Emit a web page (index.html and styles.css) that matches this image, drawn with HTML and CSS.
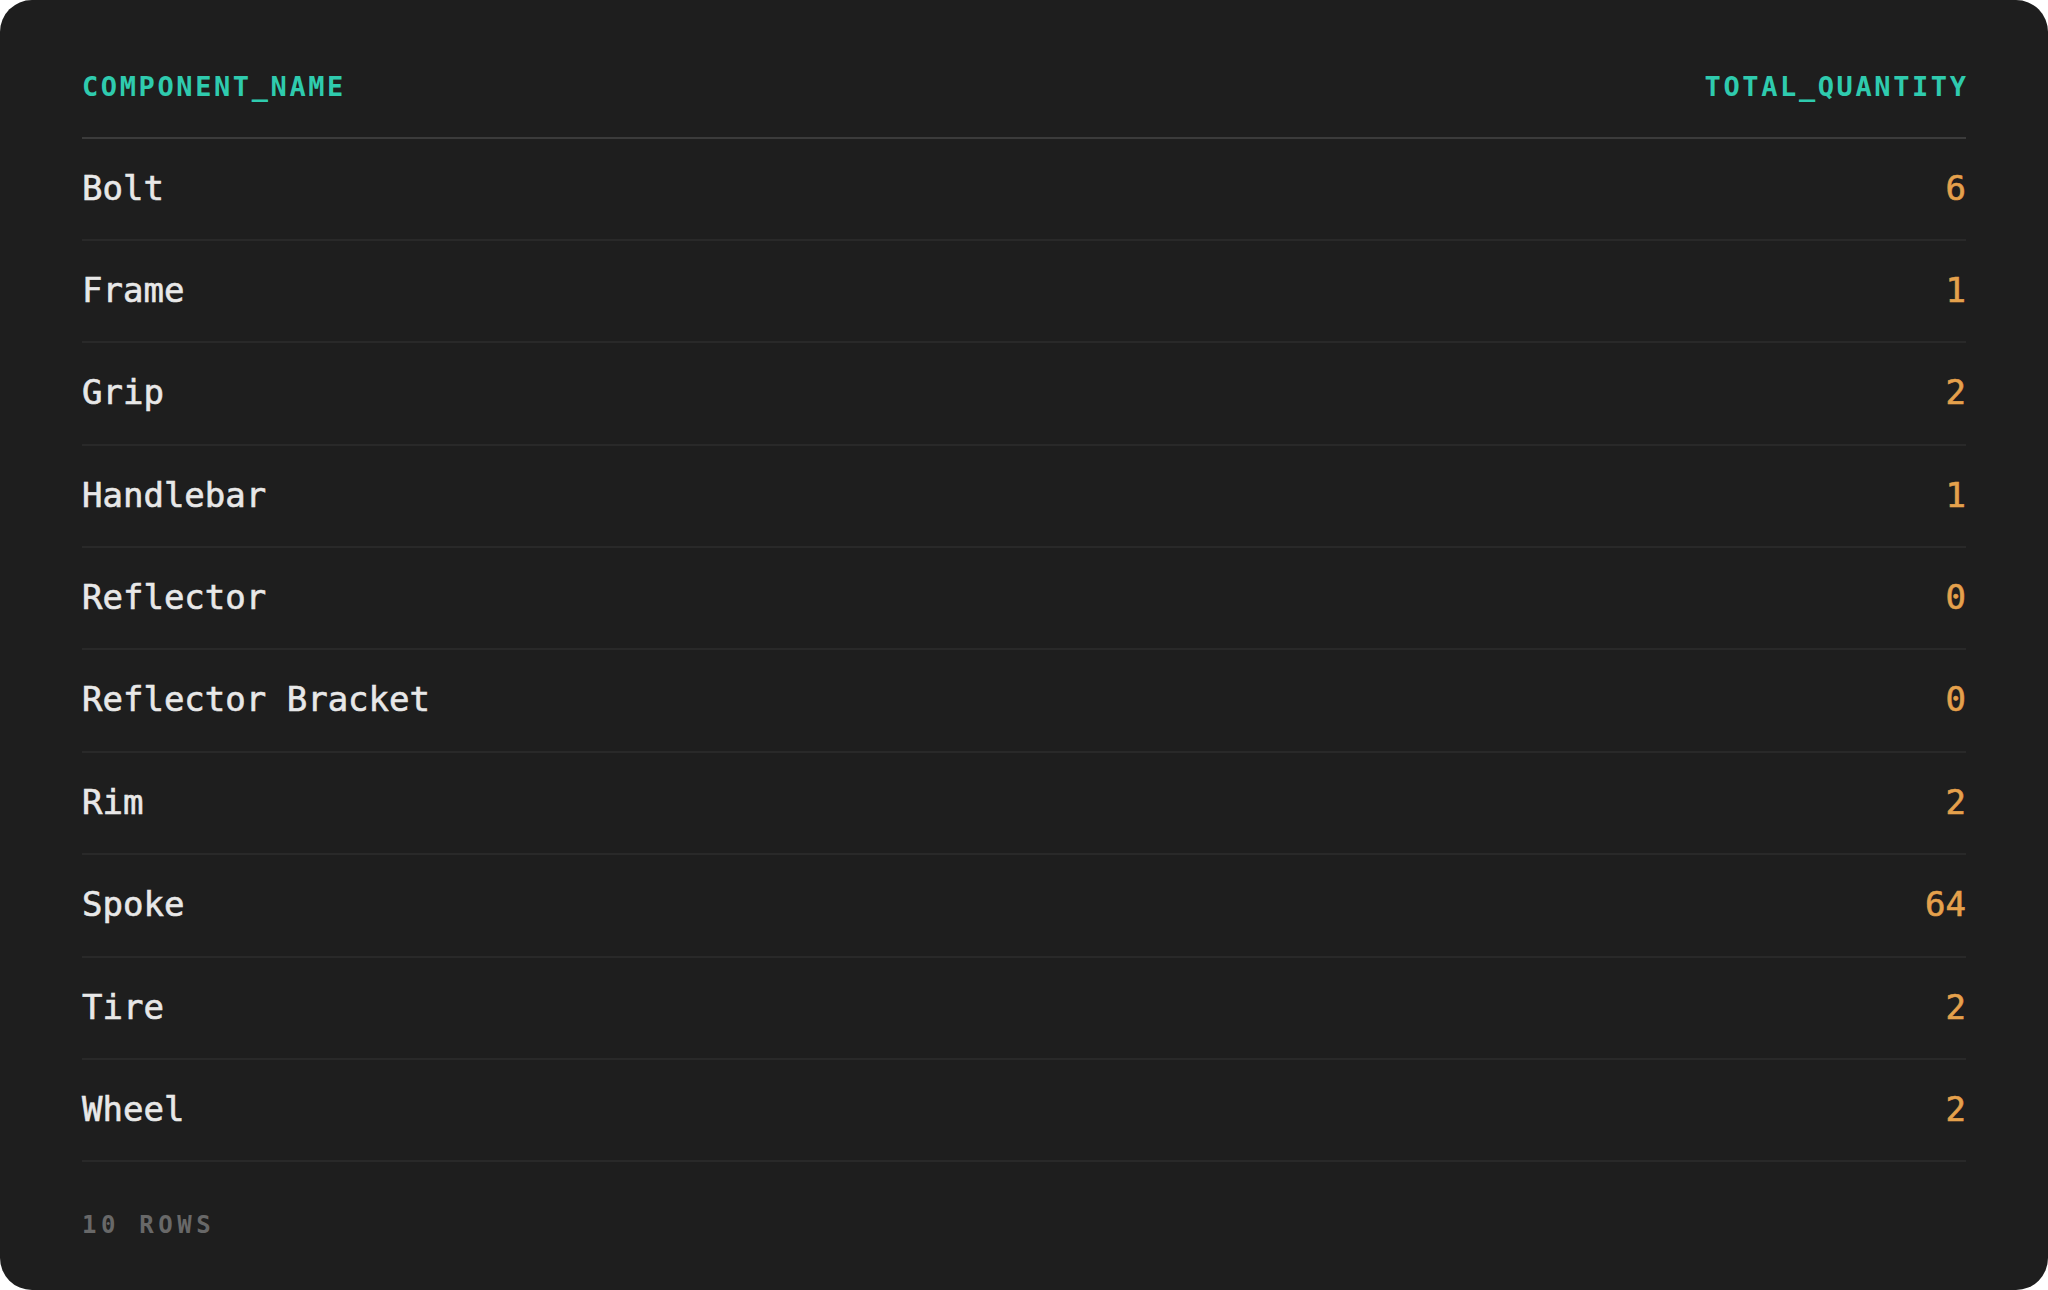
FILE: index.html
```html
<!DOCTYPE html>
<html lang="en">
<head>
<meta charset="utf-8">
<title>Query result</title>
<link rel="stylesheet" href="styles.css">
</head>
<body>
<div class="card">
  <div class="table">
    <div class="row head">
      <div class="cell name">COMPONENT_NAME</div>
      <div class="cell qty">TOTAL_QUANTITY</div>
    </div>
    <div class="row"><div class="cell name">Bolt</div><div class="cell qty">6</div></div>
    <div class="row"><div class="cell name">Frame</div><div class="cell qty">1</div></div>
    <div class="row"><div class="cell name">Grip</div><div class="cell qty">2</div></div>
    <div class="row"><div class="cell name">Handlebar</div><div class="cell qty">1</div></div>
    <div class="row"><div class="cell name">Reflector</div><div class="cell qty">0</div></div>
    <div class="row"><div class="cell name">Reflector Bracket</div><div class="cell qty">0</div></div>
    <div class="row"><div class="cell name">Rim</div><div class="cell qty">2</div></div>
    <div class="row"><div class="cell name">Spoke</div><div class="cell qty">64</div></div>
    <div class="row"><div class="cell name">Tire</div><div class="cell qty">2</div></div>
    <div class="row"><div class="cell name">Wheel</div><div class="cell qty">2</div></div>
  </div>
  <div class="footer">10 ROWS</div>
</div>
</body>
</html>
```
FILE: styles.css
```css
html, body {
  margin: 0;
  padding: 0;
  background: #ffffff;
}

.card {
  box-sizing: border-box;
  width: 2048px;
  height: 1290px;
  background: #1e1e1e;
  border-radius: 32px;
  padding: 0 82px;
  font-family: "DejaVu Sans Mono", "Liberation Mono", monospace;
  overflow: hidden;
}

.table {
  display: flex;
  flex-direction: column;
}

.row {
  display: flex;
  justify-content: space-between;
  align-items: baseline;
  box-sizing: border-box;
  height: 102.4px;
  padding-top: 29px;
  border-bottom: 2px solid #292929;
  font-size: 34px;
  line-height: 40px;
  color: #e8e8e8;
  -webkit-text-stroke: 0.6px currentColor;
}

.row.head {
  height: 138.5px;
  padding-top: 70.5px;
  border-bottom: 2px solid #3b3b3b;
  font-size: 27px;
  line-height: 32px;
  font-weight: bold;
  letter-spacing: 2.6px;
  color: #2fcbae;
  -webkit-text-stroke: 0;
}

.row .qty {
  text-align: right;
  color: #e5a14c;
}

.row.head .qty {
  color: #2fcbae;
  margin-right: -2.6px;
}

.footer {
  margin-top: 49px;
  font-size: 24px;
  line-height: 28px;
  font-weight: bold;
  letter-spacing: 4.6px;
  color: #686868;
}
```
